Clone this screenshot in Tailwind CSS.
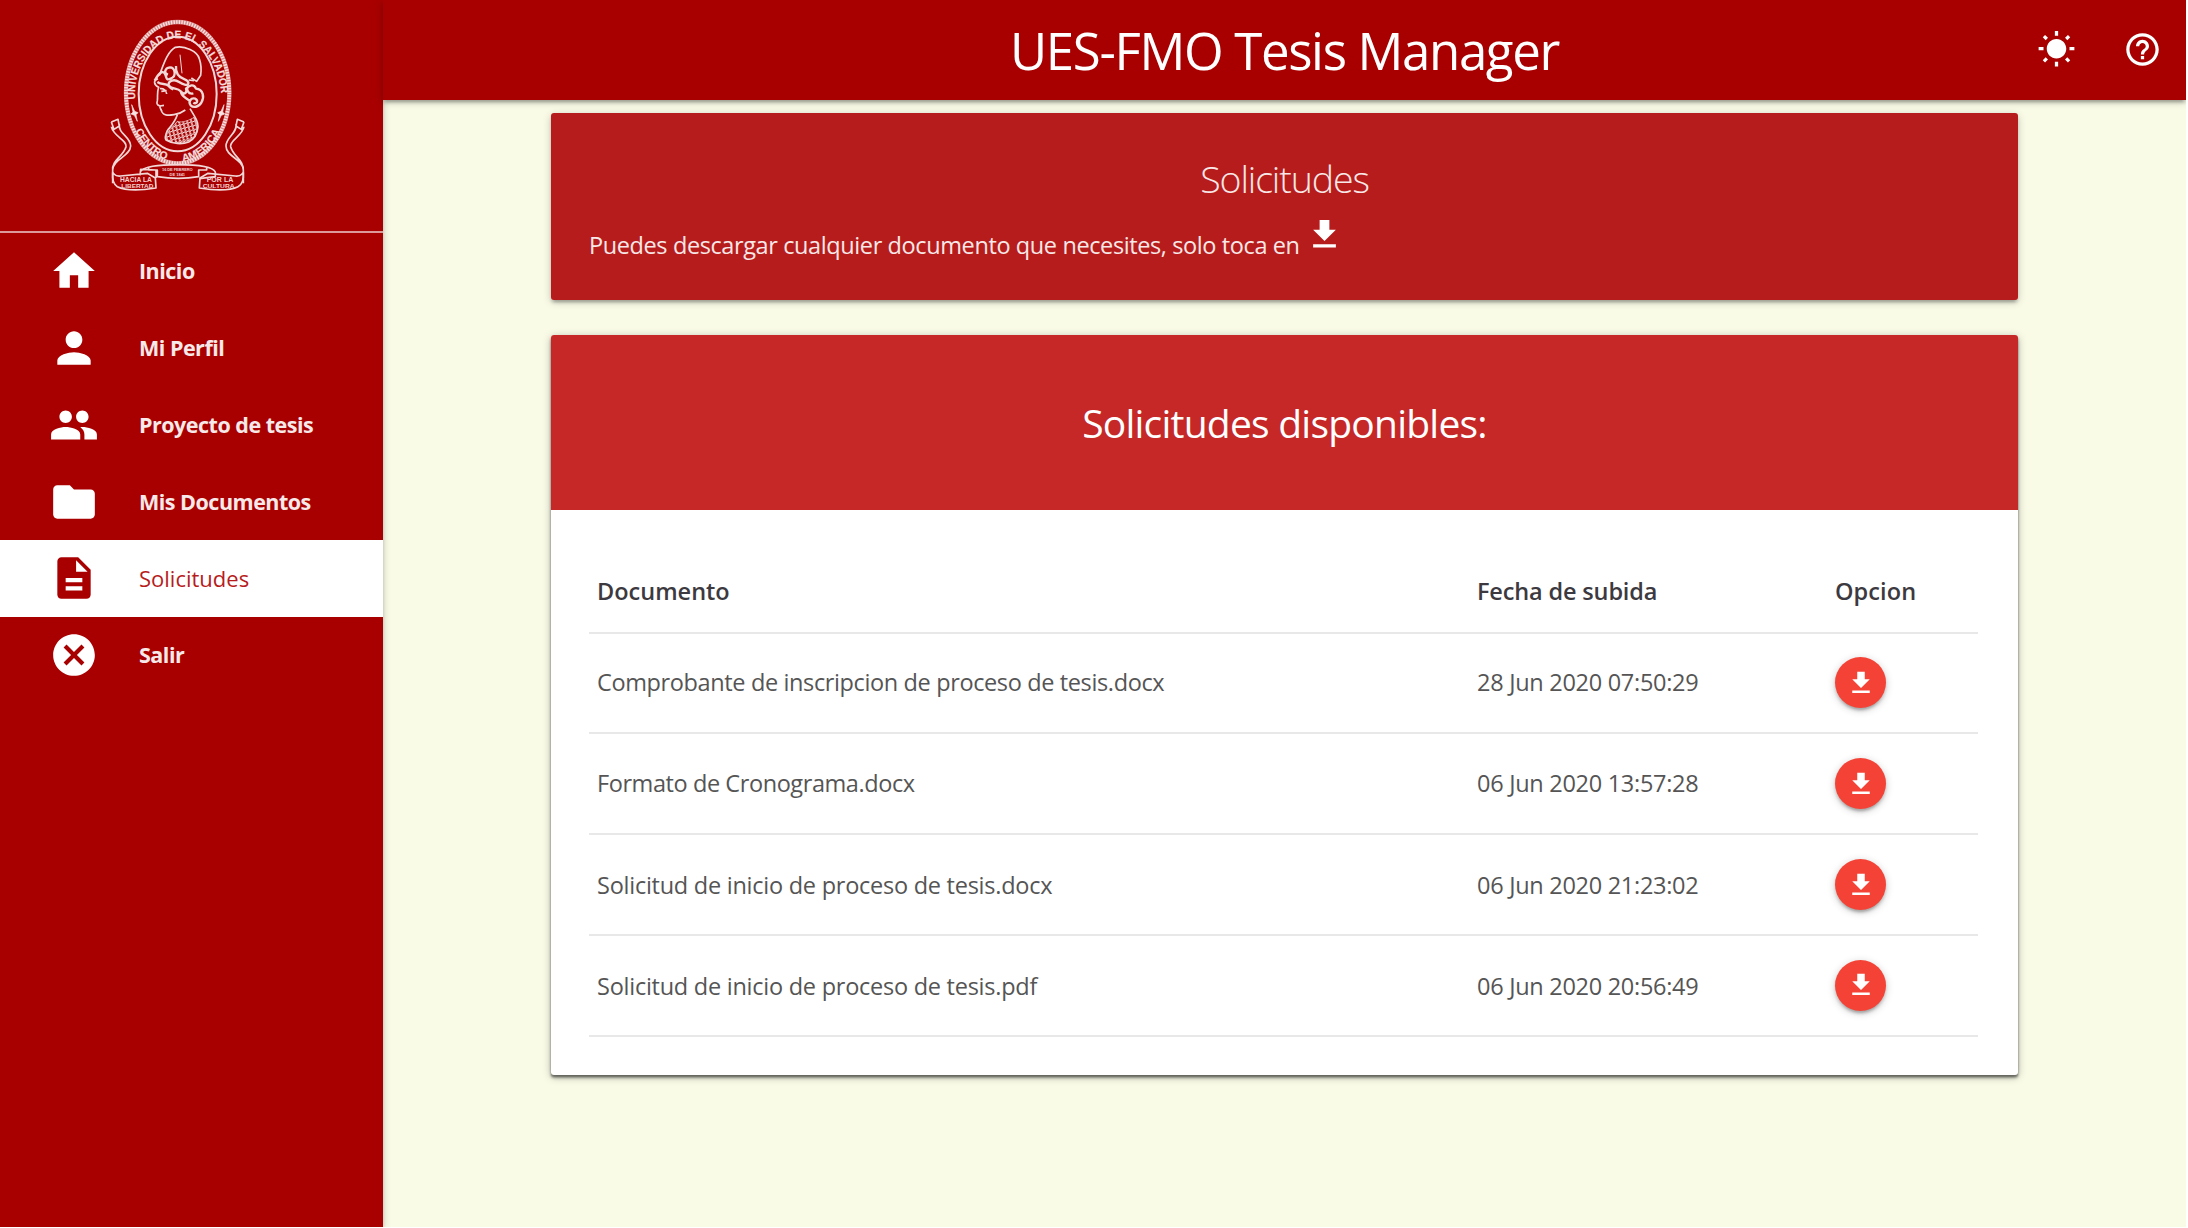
<!DOCTYPE html>
<html lang="es">
<head>
<meta charset="utf-8">
<title>UES-FMO Tesis Manager</title>
<script src="https://cdn.jsdelivr.net/npm/@tailwindcss/browser@4"></script>
</head>
<body class="bg-white font-['Open_Sans',sans-serif]">
<svg class="hidden">
  <symbol id="download" viewBox="0 0 24 24"><path d="M19 9h-4V3H9v6H5l7 7 7-7zM5 18v2h14v-2H5z"/></symbol>
</svg>
<div class="flex h-[1227px] w-[2186px] overflow-hidden bg-[#f9fbe7]">
  <!-- Sidebar -->
  <aside class="z-20 flex w-[383px] shrink-0 flex-col bg-[#a80000] text-[21.5px] font-bold text-[#f7e9e9] shadow-[0_3px_3px_0_rgba(0,0,0,.14),0_2px_8px_0_rgba(0,0,0,.2)]">
    <div class="flex h-[233px] shrink-0 border-b-2 border-[#dc9a9a] pt-2.5 pl-[90px]">
      <svg class="h-[190px] w-[180px]" viewBox="0 0 540 570" fill="none" stroke="#f3d8d8" stroke-width="5" stroke-linejoin="round">
        <defs>
          <pattern id="scales" width="12" height="12" patternUnits="userSpaceOnUse" patternTransform="rotate(-15)"><path d="M0 6q3-6 6 0t6 0M0 12q3-6 6 0t6 0M3 0v12" stroke="#f3d8d8" stroke-width="3" fill="none"/></pattern>
          <path id="arcTop" d="M136 268A128 182 0 0 1 136 228A130 182 0 0 1 390 228A128 182 0 0 1 394 290"/>
          <path id="arcLeft" d="M136 362A150 206 0 0 0 262 454"/>
          <path id="arcRight" d="M278 454A150 206 0 0 0 400 340"/>
        </defs>
        <ellipse cx="263" cy="248" rx="155" ry="212" stroke="#d98a8a" stroke-width="13"/>
        <ellipse cx="263" cy="248" rx="155" ry="212" stroke="#f8e4e4" stroke-width="11" stroke-dasharray="4 4"/>
        <ellipse cx="263" cy="252" rx="117" ry="172" stroke-width="6"/>
        <g fill="#f5dcdc" stroke="#f5dcdc" stroke-width=".6" font-family="Liberation Sans" font-weight="700" font-size="33">
          <text><textPath href="#arcTop" textLength="478" lengthAdjust="spacingAndGlyphs">UNIVERSIDAD DE EL SALVADOR</textPath></text>
          <text font-size="31"><textPath href="#arcLeft" textLength="130" lengthAdjust="spacingAndGlyphs">CENTRO</textPath></text>
          <text font-size="31"><textPath href="#arcRight" textLength="150" lengthAdjust="spacingAndGlyphs">AMERICA</textPath></text>
        </g>
        <g fill="#f8e4e4" stroke="#f8e4e4" stroke-width="2">
          <path d="M125 284l9 20 10 4-6 6 4 20-9-18-10-4 6-6z"/><path d="M402 284l-9 20-10 4 6 6-4 20 9-18 10-4-6-6z"/>
        </g>
        <!-- Bust -->
        <path d="M208 196C222 160 232 126 256 112C284 106 322 124 328 146C334 164 334 182 332 196L320 214L304 204"/>
        <path d="M270 134L276 190" stroke-width="3"/>
        <path d="M204 206C188 212 192 224 206 232C200 250 204 256 202 272C198 284 204 286 210 288C208 294 214 298 216 306C222 318 238 316 252 314C268 312 278 306 286 300M262 314C256 334 246 344 232 362C226 376 224 386 228 390C248 402 276 404 296 396C312 388 322 372 324 350C324 334 318 326 300 296"/>
        <path d="M194 212C206 190 218 180 224 190C232 204 226 212 242 206C262 198 254 172 240 172C224 174 220 190 234 194M258 168C256 190 266 202 284 208C300 214 298 228 284 224C266 220 262 206 246 212C230 218 234 232 250 238" stroke-width="7"/>
        <path d="M202 216C216 226 226 218 236 228C250 240 262 232 272 244C284 258 292 246 288 236C298 226 312 220 318 236C340 238 344 262 334 278C326 292 310 294 302 286C294 276 302 262 316 266C326 272 320 284 310 278M296 226C286 240 296 254 310 250M272 244C276 264 290 262 300 274" stroke-width="7"/>
        <path d="M210 236C220 234 230 242 230 252M214 244l16-2M210 288l12-2M296 210l16 2"/>
        <path d="M262 334C276 340 300 330 312 322C326 342 324 368 306 386C284 404 250 402 230 390C224 372 240 360 262 334z" fill="url(#scales)" stroke-width="2"/>
        <!-- Ribbons -->
        <g>
          <path d="M64 336L84 328L88 348L72 358L64 336M88 342C84 372 122 380 122 408C120 440 70 446 68 480L68 520M64 350C70 380 112 390 108 410C100 440 64 450 68 482"/>
          <path d="M462 336L442 328L438 348L454 358L462 336M438 342C442 372 408 380 408 408C408 440 458 446 460 480L460 520M462 350C456 380 418 390 422 410C430 440 462 450 460 482"/>
          <path d="M68 488C76 494 74 500 92 498L172 490L196 504L198 534C160 540 110 544 82 530C72 524 66 514 68 488zM198 504L198 480L152 478L150 496M152 484C160 474 180 464 264 464C340 464 370 474 376 486L376 500L328 506M176 470V480H202V500C240 506 290 506 326 500V480H350V470"/>
          <path d="M460 488C452 494 454 500 436 498L354 490L330 504L328 534C366 540 416 544 444 530C456 524 462 514 460 488z"/>
        </g>
        <g fill="#f3d0d0" stroke="none" font-family="Liberation Sans" font-weight="700" font-size="19" text-anchor="middle">
          <text x="138" y="515" textLength="96" lengthAdjust="spacingAndGlyphs">HACIA LA</text><text x="142" y="533" font-size="18" textLength="96" lengthAdjust="spacingAndGlyphs">LIBERTAD</text>
          <text x="390" y="515" textLength="80" lengthAdjust="spacingAndGlyphs">POR LA</text><text x="386" y="533" font-size="18" textLength="96" lengthAdjust="spacingAndGlyphs">CULTURA</text>
          <text x="262" y="484" font-size="12" textLength="92">16 DE FEBRERO</text><text x="262" y="497" font-size="12">DE 1841</text>
        </g>
      </svg>
    </div>
    <nav class="flex flex-col">
      <a class="flex h-[76.8px] items-center gap-[40.5px] pl-[48.5px]"><svg class="size-[50px] fill-white" viewBox="0 0 24 24"><path d="M10 20v-6h4v6h5v-8h3L12 3 2 12h3v8z"/></svg><span class="tracking-[-.5px]">Inicio</span></a>
      <a class="flex h-[76.8px] items-center gap-[40.5px] pl-[48.5px]"><svg class="size-[50px] fill-white" viewBox="0 0 24 24"><path d="M12 12c2.21 0 4-1.79 4-4s-1.79-4-4-4-4 1.79-4 4 1.79 4 4 4zm0 2c-2.67 0-8 1.34-8 4v2h16v-2c0-2.66-5.33-4-8-4z"/></svg><span class="tracking-[-.5px]">Mi Perfil</span></a>
      <a class="flex h-[76.8px] items-center gap-[40.5px] pl-[48.5px]"><svg class="size-[50px] fill-white" viewBox="0 0 24 24"><path d="M16 11c1.66 0 2.99-1.34 2.99-3S17.66 5 16 5c-1.66 0-3 1.34-3 3s1.34 3 3 3zm-8 0c1.66 0 2.99-1.34 2.99-3S9.66 5 8 5C6.34 5 5 6.34 5 8s1.34 3 3 3zm0 2c-2.33 0-7 1.17-7 3.5V19h14v-2.5c0-2.33-4.67-3.5-7-3.5zm8 0c-.29 0-.62.02-.97.05 1.16.84 1.97 1.97 1.97 3.45V19h6v-2.5c0-2.33-4.67-3.5-7-3.5z"/></svg><span class="tracking-[-.5px]">Proyecto de tesis</span></a>
      <a class="flex h-[76.6px] items-center gap-[40.5px] pl-[48.5px]"><svg class="size-[50px] fill-white" viewBox="0 0 24 24"><path d="M10 4H4c-1.1 0-1.99.9-1.99 2L2 18c0 1.1.9 2 2 2h16c1.1 0 2-.9 2-2V8c0-1.1-.9-2-2-2h-8l-2-2z"/></svg><span class="tracking-[-.5px]">Mis Documentos</span></a>
      <a class="flex h-[77px] items-center gap-[40.5px] bg-white pl-[48.5px] text-[22px] font-medium text-[#b71c1c]"><svg class="size-[50px] fill-[#a80000]" viewBox="0 0 24 24"><path d="M14 2H6c-1.1 0-1.99.9-1.99 2L4 20c0 1.1.89 2 1.99 2H18c1.1 0 2-.9 2-2V8l-6-6zm2 16H8v-2h8v2zm0-4H8v-2h8v2zm-3-5V3.5L18.5 9H13z"/></svg><span>Solicitudes</span></a>
      <a class="flex h-[76.8px] items-center gap-[40.5px] pl-[48.5px]"><svg class="size-[50px] fill-white" viewBox="0 0 24 24"><path d="M12 2C6.47 2 2 6.47 2 12s4.47 10 10 10 10-4.47 10-10S17.53 2 12 2zm5 13.59L15.59 17 12 13.41 8.41 17 7 15.59 10.59 12 7 8.41 8.41 7 12 10.59 15.59 7 17 8.41 13.41 12 17 15.59z"/></svg><span class="tracking-[-.5px]">Salir</span></a>
    </nav>
  </aside>

  <div class="flex grow flex-col">
    <!-- Top bar -->
    <header class="z-30 grid h-[100px] shrink-0 grid-cols-[1fr_auto_1fr] items-center bg-[#a80000] shadow-[0_3px_3px_0_rgba(0,0,0,.14),0_5px_2px_-3px_rgba(0,0,0,.12),0_2px_8px_0_rgba(0,0,0,.2)]">
      <span></span>
      <h1 class="pt-px text-[51px] leading-none tracking-[-1.36px] text-white">UES-FMO Tesis Manager</h1>
      <div class="flex items-center justify-end gap-[47.5px] pr-[24px] pb-[2px]">
        <svg class="size-[39px] fill-white" viewBox="0 0 24 24"><path d="M6.76 4.84l-1.8-1.79-1.41 1.41 1.79 1.79 1.42-1.41zM4 10.5H1v2h3v-2zm9-9.95h-2V3.5h2V.55zm7.45 3.91l-1.41-1.41-1.79 1.79 1.41 1.41 1.79-1.79zm-3.21 13.7l1.79 1.8 1.41-1.41-1.8-1.79-1.4 1.4zM20 10.5v2h3v-2h-3zm-8-5c-3.31 0-6 2.69-6 6s2.69 6 6 6 6-2.69 6-6-2.69-6-6-6zm-1 16.95h2V19.5h-2v2.95zm-7.45-3.91l1.41 1.41 1.79-1.8-1.41-1.41-1.79 1.8z"/></svg>
        <svg class="size-[39px] fill-white" viewBox="0 0 24 24"><path d="M11 18h2v-2h-2v2zm1-16C6.48 2 2 6.48 2 12s4.48 10 10 10 10-4.48 10-10S17.52 2 12 2zm0 18c-4.41 0-8-3.59-8-8s3.59-8 8-8 8 3.59 8 8-3.59 8-8 8zm0-14c-2.21 0-4 1.79-4 4h2c0-1.1.9-2 2-2s2 .9 2 2c0 2-3 1.75-3 5h2c0-2.25 3-2.5 3-5 0-2.21-1.79-4-4-4z"/></svg>
      </div>
    </header>

    <main class="mx-auto flex w-[1467px] flex-col gap-[35px] pt-[13px] text-[23.5px]">
      <section class="flex h-[187px] flex-col rounded-[3px] bg-[#b71c1c] px-[38px] pt-[39px] text-[#f8e8e8] shadow-[0_3px_3px_0_rgba(0,0,0,.14),0_5px_2px_-3px_rgba(0,0,0,.12),0_2px_8px_0_rgba(0,0,0,.2)]">
        <h2 class="h-[53px] text-center text-[37.5px] leading-[54px] font-light tracking-[-1.1px]">Solicitudes</h2>
        <p class="flex items-start tracking-[-.39px]"><span class="pt-[22px] leading-[36px]">Puedes descargar cualquier documento que necesites, solo toca en</span><svg class="mt-[10px] ml-[5px] size-[39px] fill-white"><use href="#download"/></svg></p>
      </section>

      <section class="rounded-[3px] bg-white shadow-[0_3px_3px_0_rgba(0,0,0,.3),0_2px_2px_0_rgba(0,0,0,.3),0_2px_8px_0_rgba(0,0,0,.28)]">
        <div class="flex h-[175px] items-center justify-center rounded-t-[3px] bg-[#c62828] text-white">
          <h2 class="text-[39px] leading-none tracking-[-.77px]">Solicitudes disponibles:</h2>
        </div>
        <div class="h-[565px] px-[38px] pt-[38px]">
          <table class="w-[1389px] table-fixed border-collapse text-left text-[#555]">
            <colgroup><col class="w-[880px]"><col class="w-[358px]"><col class="w-[151px]"></colgroup>
            <thead class="text-[#3c3a40]">
              <tr class="h-[84.6px] border-b-2 border-[#e8e8e8]"><th class="px-2 pt-[3px] font-semibold">Documento</th><th class="px-2 pt-[3px] font-semibold tracking-[-.15px]">Fecha de subida</th><th class="px-2 pt-[3px] font-semibold tracking-[.1px]">Opcion</th></tr>
            </thead>
            <tbody>
              <tr class="h-[100.8px] border-b-2 border-[#e8e8e8]"><td class="px-2 tracking-[-.37px]">Comprobante de inscripcion de proceso de tesis.docx</td><td class="px-2 tracking-[-.28px]">28 Jun 2020 07:50:29</td><td class="px-2"><button class="flex size-[51px] items-center justify-center rounded-full bg-[#f44336] shadow-[0_3px_3px_0_rgba(0,0,0,.14),0_5px_2px_-3px_rgba(0,0,0,.12),0_2px_8px_0_rgba(0,0,0,.2)]"><svg class="size-[30px] fill-white"><use href="#download"/></svg></button></td></tr>
              <tr class="h-[100.8px] border-b-2 border-[#e8e8e8]"><td class="px-2 tracking-[-.42px]">Formato de Cronograma.docx</td><td class="px-2 tracking-[-.28px]">06 Jun 2020 13:57:28</td><td class="px-2"><button class="flex size-[51px] items-center justify-center rounded-full bg-[#f44336] shadow-[0_3px_3px_0_rgba(0,0,0,.14),0_5px_2px_-3px_rgba(0,0,0,.12),0_2px_8px_0_rgba(0,0,0,.2)]"><svg class="size-[30px] fill-white"><use href="#download"/></svg></button></td></tr>
              <tr class="h-[100.8px] border-b-2 border-[#e8e8e8]"><td class="px-2 pt-[2px] tracking-[-.25px]">Solicitud de inicio de proceso de tesis.docx</td><td class="px-2 pt-[2px] tracking-[-.28px]">06 Jun 2020 21:23:02</td><td class="px-2"><button class="flex size-[51px] items-center justify-center rounded-full bg-[#f44336] shadow-[0_3px_3px_0_rgba(0,0,0,.14),0_5px_2px_-3px_rgba(0,0,0,.12),0_2px_8px_0_rgba(0,0,0,.2)]"><svg class="size-[30px] fill-white"><use href="#download"/></svg></button></td></tr>
              <tr class="h-[100.8px] border-b-2 border-[#e8e8e8]"><td class="px-2 pt-[2px] tracking-[-.25px]">Solicitud de inicio de proceso de tesis.pdf</td><td class="px-2 pt-[2px] tracking-[-.28px]">06 Jun 2020 20:56:49</td><td class="px-2"><button class="flex size-[51px] items-center justify-center rounded-full bg-[#f44336] shadow-[0_3px_3px_0_rgba(0,0,0,.14),0_5px_2px_-3px_rgba(0,0,0,.12),0_2px_8px_0_rgba(0,0,0,.2)]"><svg class="size-[30px] fill-white"><use href="#download"/></svg></button></td></tr>
            </tbody>
          </table>
        </div>
      </section>
    </main>
  </div>
</div>
</body>
</html>
